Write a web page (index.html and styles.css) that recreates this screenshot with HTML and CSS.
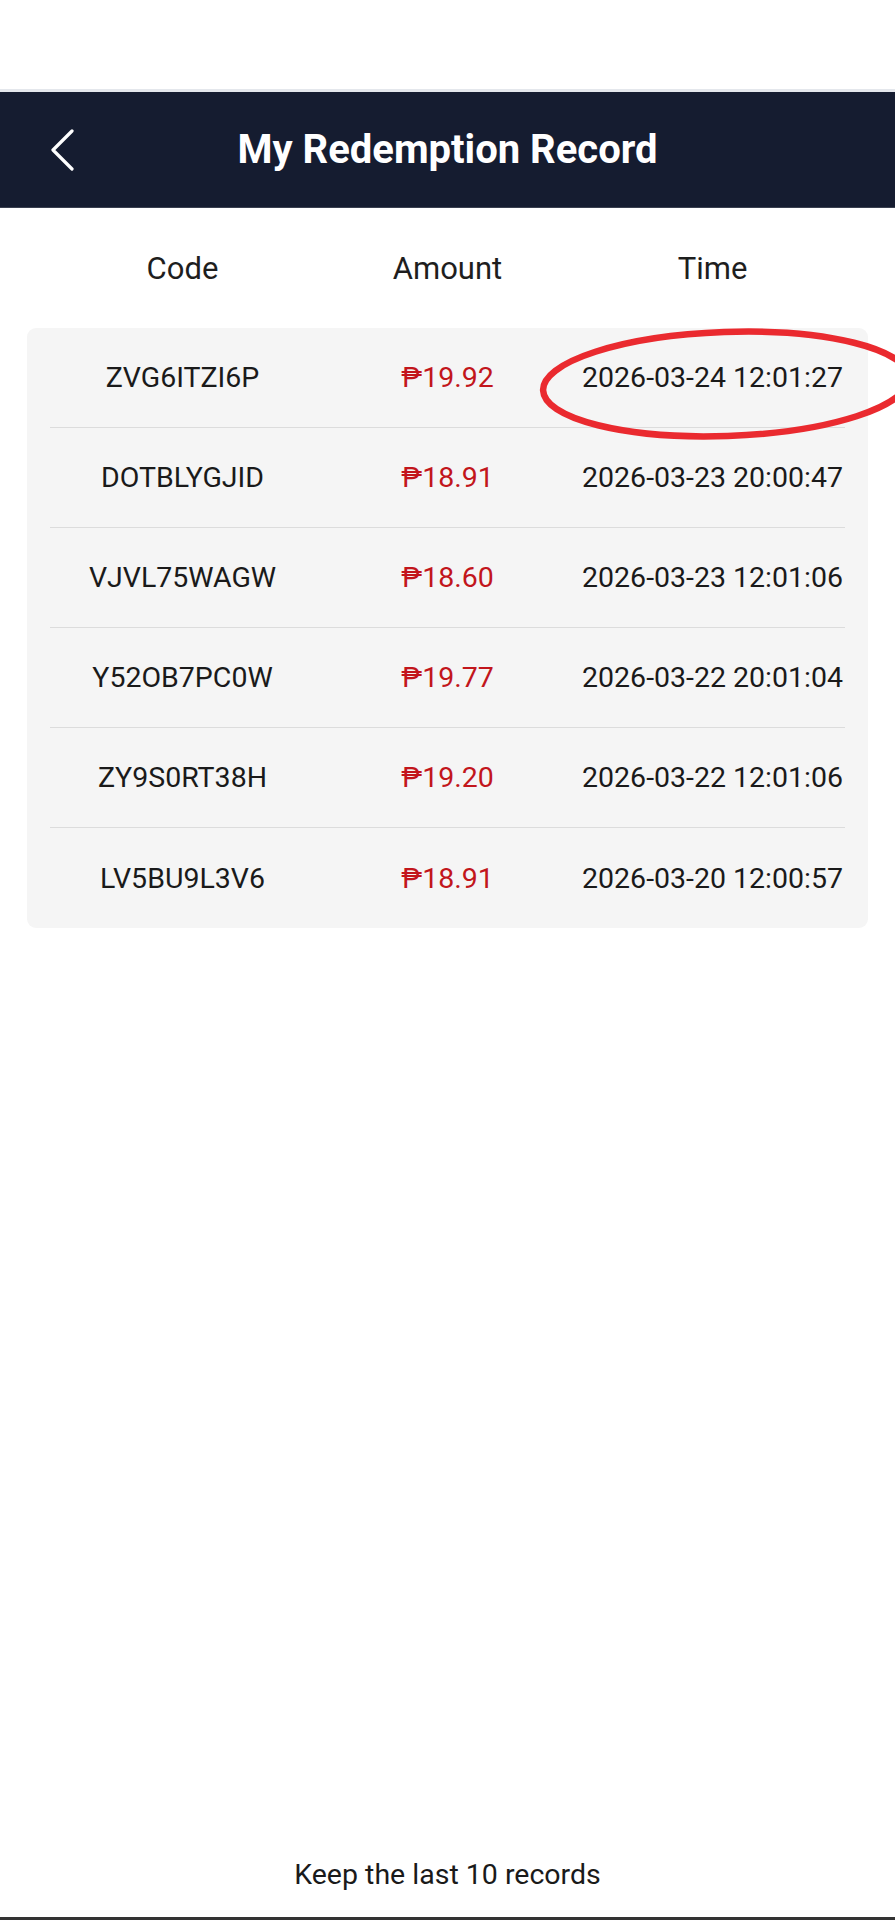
FILE: index.html
```html
<!DOCTYPE html>
<html lang="en">
<head>
<meta charset="utf-8">
<title>My Redemption Record</title>
<link rel="stylesheet" href="styles.css">
</head>
<body>
<div class="page">
  <div class="status-space"></div>
  <header class="topbar">
    <span class="back">
      <svg width="30" height="44" viewBox="0 0 30 44"><path d="M23 4 L4 23 L23 42" fill="none" stroke="#fff" stroke-width="3.2" stroke-linecap="round" stroke-linejoin="round"/></svg>
    </span>
    <h1 class="title">My Redemption Record</h1>
  </header>

  <div class="thead">
    <div class="cell">Code</div>
    <div class="cell">Amount</div>
    <div class="cell">Time</div>
  </div>

  <div class="card">
    <div class="row"><div class="cell">ZVG6ITZI6P</div><div class="cell amount">₱19.92</div><div class="cell">2026-03-24 12:01:27</div></div>
    <div class="row"><div class="cell">DOTBLYGJID</div><div class="cell amount">₱18.91</div><div class="cell">2026-03-23 20:00:47</div></div>
    <div class="row"><div class="cell">VJVL75WAGW</div><div class="cell amount">₱18.60</div><div class="cell">2026-03-23 12:01:06</div></div>
    <div class="row"><div class="cell">Y52OB7PC0W</div><div class="cell amount">₱19.77</div><div class="cell">2026-03-22 20:01:04</div></div>
    <div class="row"><div class="cell">ZY9S0RT38H</div><div class="cell amount">₱19.20</div><div class="cell">2026-03-22 12:01:06</div></div>
    <div class="row"><div class="cell">LV5BU9L3V6</div><div class="cell amount">₱18.91</div><div class="cell">2026-03-20 12:00:57</div></div>
  </div>

  <footer class="foot">Keep the last 10 records</footer>

  <svg class="mark" width="360" height="124" viewBox="0 0 360 124">
    <ellipse cx="191" cy="62" rx="183" ry="52" transform="rotate(-2 191 62)" fill="none" stroke="#ea2a2f" stroke-width="6.5"/>
  </svg>
</div>
</body>
</html>
```
FILE: styles.css
```css
html, body {
  margin: 0;
  padding: 0;
}
body {
  background: #ffffff;
  font-family: Roboto, "Noto Sans", "Liberation Sans", sans-serif;
  color: #1c1c1c;
}
.page {
  position: relative;
  min-height: 1920px;
  display: flex;
  flex-direction: column;
  overflow: hidden;
}
.status-space {
  height: 89px;
  border-bottom: 3px solid #e4e7ec;
  background: #fff;
}
.topbar {
  height: 116px;
  background: #151c30;
  display: flex;
  align-items: center;
  justify-content: center;
  position: relative;
  border-bottom: 1px solid #3a4050;
  box-sizing: border-box;
}
.back {
  position: absolute;
  left: 49px;
  top: 35px;
  display: block;
  line-height: 0;
}
.title {
  margin: 0;
  color: #fff;
  font-size: 40px;
  font-weight: 700;
  letter-spacing: 0;
}
.thead {
  display: grid;
  grid-template-columns: 1fr 1fr 1fr;
  margin: 0 27px;
  padding: 0 23px;
  height: 120px;
  align-items: center;
  font-size: 31px;
  color: #1e1e1e;
}
.cell {
  text-align: center;
  white-space: nowrap;
}
.card {
  margin: 0 27px;
  padding: 0 23px;
  background: #f5f5f5;
  border-radius: 9px;
}
.row {
  display: grid;
  grid-template-columns: 1fr 1fr 1fr;
  height: 100px;
  align-items: center;
  font-size: 28.5px;
  color: #1a1a1a;
  border-bottom: 1px solid #dcdcdc;
  box-sizing: border-box;
}
.row:last-child {
  border-bottom: none;
}
.amount {
  color: #c2161c;
}
.foot {
  margin-top: auto;
  text-align: center;
  font-size: 28.5px;
  color: #1a1a1a;
  padding-bottom: 26px;
  border-bottom: 3px solid #333;
}
.mark {
  position: absolute;
  left: 535px;
  top: 322px;
}
```
